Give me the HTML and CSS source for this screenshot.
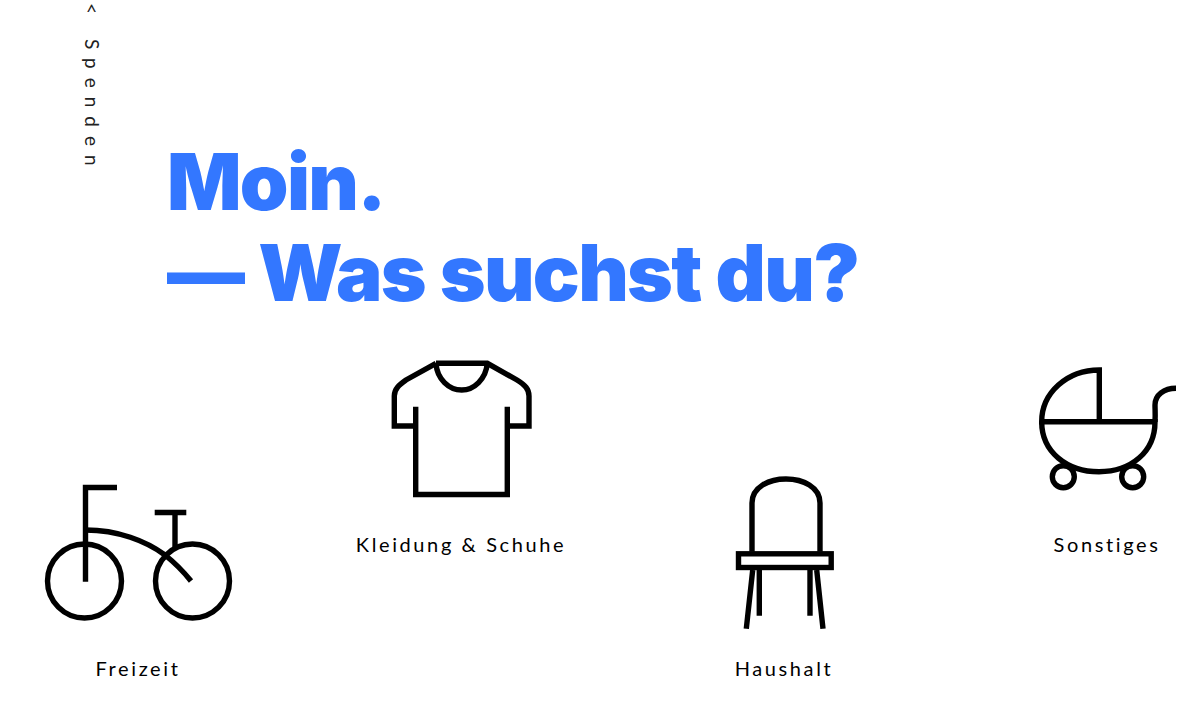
FILE: index.html
```html
<!DOCTYPE html>
<html lang="de">
<head>
	<meta charset="utf-8">
	<title>Moin</title>
	<link rel="stylesheet" href="styles.css">
</head>
<body>
<div class="hero">
	<a class="side-link" href="#">&lt; Spenden</a>
	<h1 class="title">Moin.<br>— Was suchst du?</h1>
</div>

<div class="cats">
	<a class="cat low" href="#">
		<svg class="icon" viewBox="0 -10 200 170">
			<path d="M79 8.5H47.5V102.7"/>
			<circle cx="46.5" cy="102" r="37"/>
			<circle cx="154.500" cy="102" r="37"/>
			<path d="M116.7 33.5H148.3M137 33.5V70"/>
			<path d="M47.5 51C80 51 108 62 127 76C137 84 145 92 153 102"/>
		</svg>
		<span class="cat-name">Freizeit</span>
	</a>
	<a class="cat" href="#">
		<svg class="icon" viewBox="0 -10 200 170">
			<path d="M75 8.3H126.3L156 25C164 30 168 34 168 41V71H146.3M146.3 51.700V139.500H54.7V51.700M54.7 71H33.3V41C33.3 34 38 30 45 25L75 8.3"/>
			<path d="M75 8.3C76 24 88 35 100.7 35C113 35 125 24 126.3 8.3"/>
		</svg>
		<span class="cat-name">Kleidung &amp; Schuhe</span>
	</a>
	<a class="cat low" href="#">
		<svg class="icon" viewBox="0 -10 200 170">
			<path d="M68 72.7V24C68 8 85 0 102 0C119 0 136 8 136 24V72.7"/>
			<rect x="54.5" y="74.8" width="92.7" height="13.7"/>
			<path d="M68.7 91L62.3 149.7M75.3 91V136.7M126 91V136.7M132.7 91L139 149.7"/>
		</svg>
		<span class="cat-name">Haushalt</span>
	</a>
	<a class="cat" href="#">
		<svg class="icon" viewBox="0 -10 200 170">
			<path d="M92.3 66.7V15C60 15 34.7 38 34.7 66.7H148C148 97 124 116.7 92 116.7C60 116.7 34.7 97 34.7 66.7"/>
			<path d="M148 66.7C148.500 60 148 55 148 50C148 40 157 33.300 169 33.300"/>
			<circle cx="56.300" cy="121.700" r="11"/>
			<circle cx="125.700" cy="121.700" r="11"/>
		</svg>
		<span class="cat-name">Sonstiges</span>
	</a>
</div>
</body>
</html>
```

FILE: styles.css
```css
html, body {
	margin: 0;
	padding: 0;
}

body {
	height: 706px;
	overflow: hidden;
	background: #fff;
	font-family: "Lato", "Liberation Sans", sans-serif;
}

.hero {
	display: flex;
	align-items: flex-start;
	padding-left: 81px;
}

.side-link {
	writing-mode: vertical-rl;
	width: 22px;
	margin-top: 3px;
	font-size: 19px;
	line-height: 22px;
	letter-spacing: 9px;
	word-spacing: 2px;
	color: #222;
	text-decoration: none;
}

.title {
	margin: 136px 0 0 64px;
	font-family: "Inter", "Lato", sans-serif;
	font-size: 78px;
	font-weight: 900;
	line-height: 91px;
	letter-spacing: -1.7px;
	word-spacing: 1px;
	color: #3377ff;
	white-space: nowrap;
}

.cats {
	display: grid;
	grid-template-columns: repeat(4, 276px);
	column-gap: 47px;
	margin-top: 27px;
}

.cat {
	display: flex;
	flex-direction: column;
	align-items: center;
	color: #000;
	text-decoration: none;
}

.cat.low {
	margin-top: 124px;
}

.icon {
	display: block;
	width: 200px;
	height: 170px;
	fill: none;
	stroke: #000;
	stroke-width: 5.4;
}

.cat-name {
	margin-top: 17px;
	font-size: 20px;
	line-height: 24px;
	letter-spacing: 2.6px;
}
```
